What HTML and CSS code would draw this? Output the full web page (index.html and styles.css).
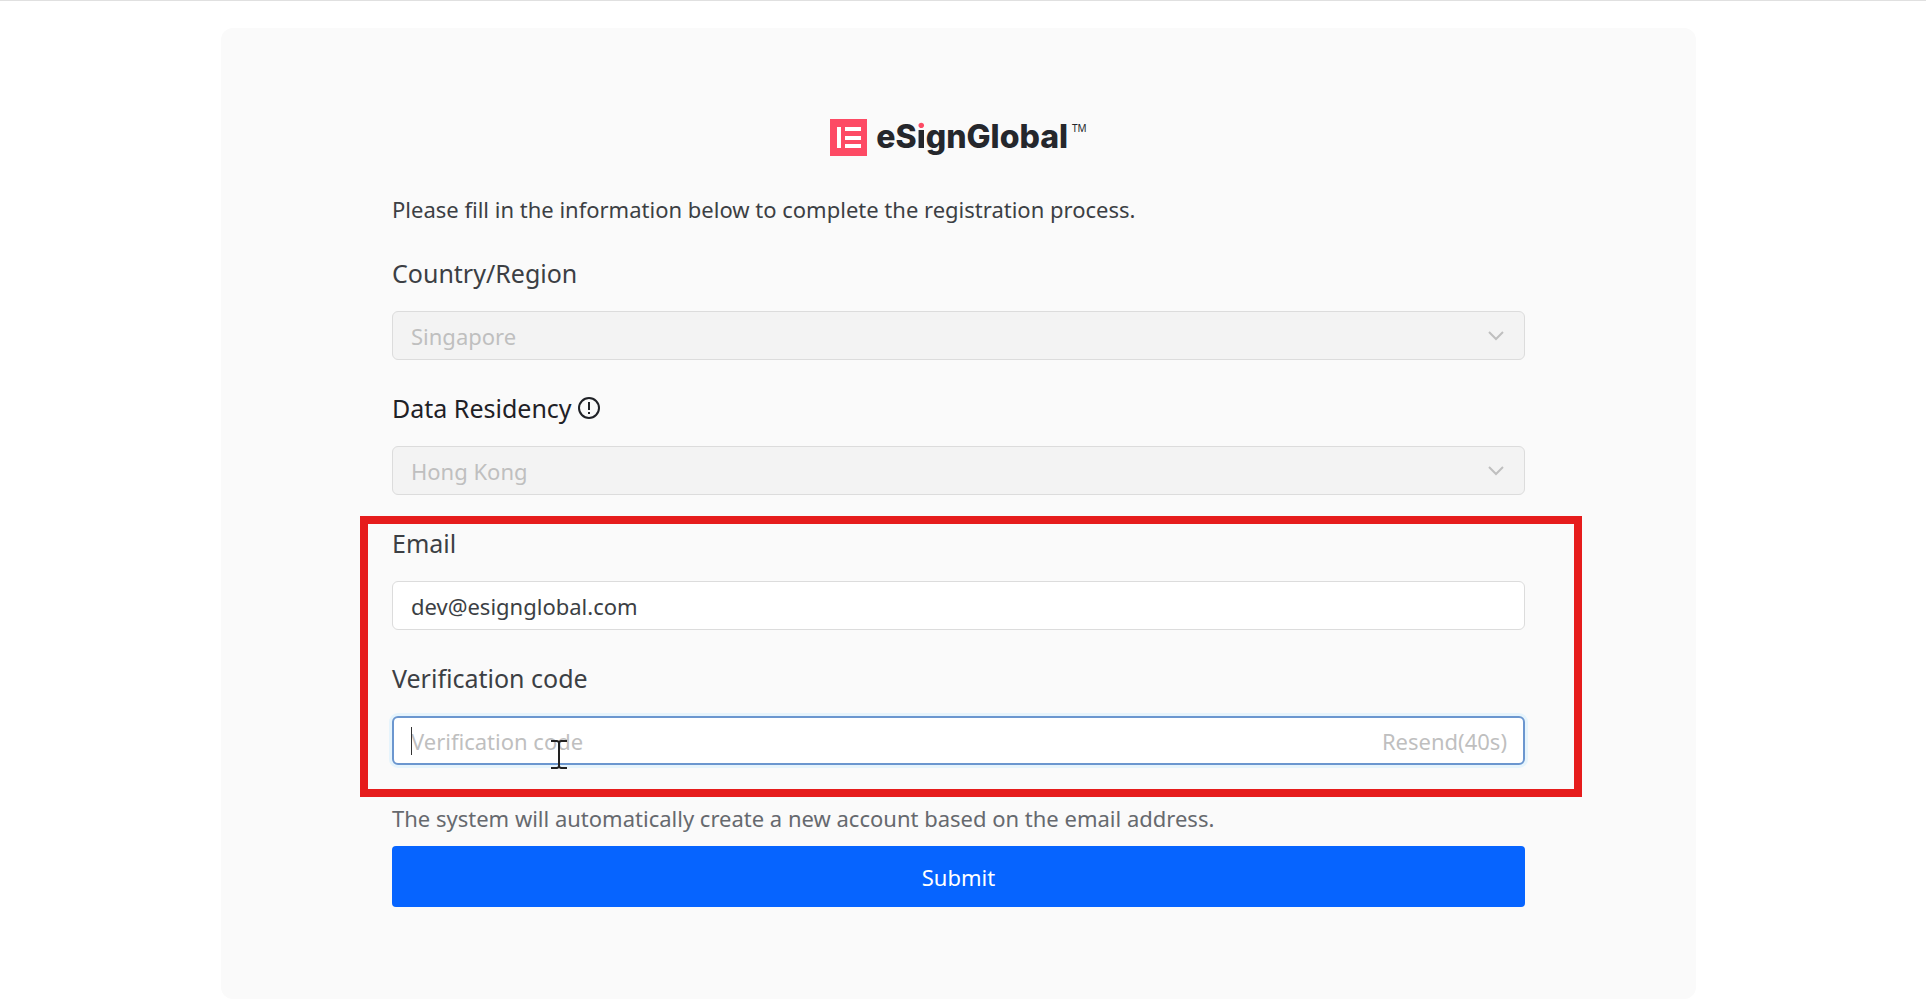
FILE: index.html
```html
<!DOCTYPE html>
<html lang="en">
<head>
    <meta charset="UTF-8">
    <title>eSignGlobal</title>
    <link rel="stylesheet" href="styles.css">
</head>
<body>
    <main class="card">
        <div class="logo">
            <svg class="logo-mark" viewBox="0 0 37 37" aria-hidden="true">
                <rect width="37" height="37" fill="#fd4a64"/>
                <path fill="#fff" d="M7 8h4v21H7zM15 8h16v4H15zM15 17h16v4H15zM15 25h16v4H15z"/>
            </svg>
            <span class="logo-text">eS<span class="logo-i">i</span>gnGlobal</span>
            <span class="logo-tm">TM</span>
        </div>

        <form>
            <p class="intro">Please fill in the information below to complete the registration process.</p>

            <div class="field">
                <label for="country">Country/Region</label>
                <div class="control">
                    <select id="country" disabled>
                        <option>Singapore</option>
                    </select>
                    <svg class="arrow" viewBox="0 0 16 10" aria-hidden="true"><path d="M1 1l7 7 7-7"/></svg>
                </div>
            </div>

            <div class="field">
                <label for="residency" class="dark">Data Residency
                    <svg class="info" viewBox="0 0 22 22" aria-hidden="true">
                        <circle cx="11" cy="11" r="10"/>
                        <path d="M11 5v8M11 15v2"/>
                    </svg>
                </label>
                <div class="control">
                    <select id="residency" disabled>
                        <option>Hong Kong</option>
                    </select>
                    <svg class="arrow" viewBox="0 0 16 10" aria-hidden="true"><path d="M1 1l7 7 7-7"/></svg>
                </div>
            </div>

            <div class="highlight">
                <div class="field">
                    <label for="email">Email</label>
                    <div class="control">
                        <input type="email" id="email" value="dev@esignglobal.com">
                    </div>
                </div>

                <div class="field">
                    <label for="code">Verification code</label>
                    <div class="control active">
                        <input type="text" id="code" placeholder="Verification code">
                        <span class="caret"></span>
                        <button type="button" class="resend" disabled>Resend(40s)</button>
                        <svg class="pointer" viewBox="0 0 16 29" aria-hidden="true"><path d="M0 1h6l2 1 2-1h6M8 2v25M0 28h6l2-1 2 1h6"/></svg>
                    </div>
                </div>
            </div>

            <p class="note">The system will automatically create a new account based on the email address.</p>
            <button type="submit" class="submit">Submit</button>
        </form>
    </main>
</body>
</html>
```

FILE: styles.css
```css
* {
    box-sizing: border-box;
}

body {
    margin: 0;
    padding: 27px 230px 10px 221px;
    border-top: 1px solid #e0e0e0;
    background: #fff;
    color: #3c3f44;
    font-family: 'Noto Sans', 'Open Sans', sans-serif;
    font-size: 22px;
}

.card {
    padding: 86px 171px 92px;
    background: #fafafa;
    border-radius: 12px;
}

.logo {
    display: flex;
    justify-content: center;
    height: 46px;
    color: #25272c;
}

.logo-mark {
    width: 37px;
    height: 37px;
    margin: 5px 9px 0 0;
}

.logo-text {
    font-family: Inter, sans-serif;
    font-size: 32px;
    font-weight: 800;
    line-height: 46px;
}

.logo-i {
    background: linear-gradient(#fd4a64 13px, #25272c 13px);
    -webkit-background-clip: text;
    background-clip: text;
    color: transparent;
}

.logo-tm {
    margin: 8px 0 0 4px;
    font-size: 10px;
    line-height: 12px;
}

.intro {
    margin: 34px 0 29px;
    line-height: 30px;
}

.field {
    margin-bottom: 28px;
}

label {
    display: flex;
    align-items: center;
    gap: 6px;
    height: 40px;
    margin-bottom: 18px;
    font-size: 25px;
}

.dark {
    color: #1f2126;
}

.info {
    width: 22px;
    height: 22px;
    fill: none;
    stroke: #1f2126;
    stroke-width: 2;
}

.control {
    position: relative;
}

select,
input {
    display: block;
    width: 100%;
    height: 49px;
    padding: 0 18px;
    border: 1px solid #dcdcdc;
    border-radius: 6px;
    background: #fff;
    color: #3c3f44;
    font: inherit;
    outline: none;
}

select {
    appearance: none;
    background: #f3f3f3;
    color: #bfbfbf;
    opacity: 1;
}

input::placeholder {
    color: #bfbfbf;
    opacity: 1;
}

.arrow {
    position: absolute;
    top: 20px;
    right: 21px;
    width: 16px;
    height: 10px;
    fill: none;
    stroke: #bfbfbf;
    stroke-width: 2;
}

.active input {
    padding: 0 17px;
    border: 2px solid #6b96cf;
    box-shadow: 0 0 0 3px #e6f4fc;
}

.caret {
    position: absolute;
    top: 11px;
    left: 19px;
    width: 1px;
    height: 28px;
    background: #333;
}

.resend {
    position: absolute;
    top: 0;
    right: 18px;
    height: 49px;
    padding: 0;
    border: none;
    background: none;
    color: #bfbfbf;
    font: inherit;
}

.pointer {
    position: absolute;
    top: 24px;
    left: 159px;
    width: 16px;
    height: 29px;
    fill: none;
    stroke: #222;
    stroke-width: 2;
}

/* red frame around the email and code fields */
.highlight {
    position: relative;
}

.highlight::before {
    content: "";
    position: absolute;
    top: -7px;
    right: -57px;
    bottom: -32px;
    left: -32px;
    border: 8px solid #e61c1c;
    pointer-events: none;
}

.note {
    margin: 0 0 13px;
    padding-top: 10px;
    color: #66696e;
    line-height: 30px;
}

.submit {
    display: block;
    width: 100%;
    height: 61px;
    border: none;
    border-radius: 4px;
    background: #0664ff;
    color: #fff;
    font: inherit;
    cursor: pointer;
}
```
